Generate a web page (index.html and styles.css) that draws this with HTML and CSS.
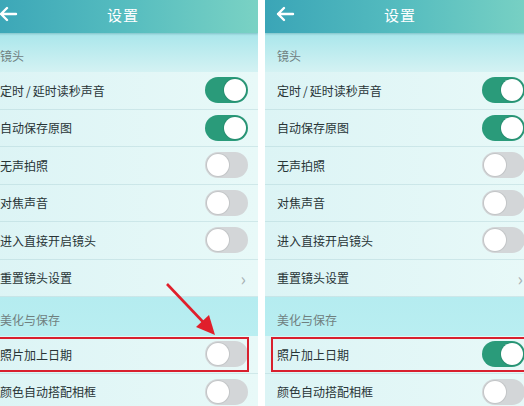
FILE: index.html
```html
<!DOCTYPE html>
<html lang="zh">
<head>
<meta charset="utf-8">
<link rel="stylesheet" href="styles.css">
</head>
<body>
<div class="stage">
  <div class="panel panel-left">
    <div class="header">
      <svg class="back" viewBox="0 0 20 16" width="20" height="16"><path d="M18 8H3M9 2L3 8l6 6" fill="none" stroke="#fff" stroke-width="2.4" stroke-linecap="round" stroke-linejoin="round"/></svg>
      <div class="title">设置</div>
    </div>
    <div class="section sec1">镜头</div>
    <div class="row"><span>定时<b class="sl">/</b>延时读秒声音</span><i class="tg on"></i></div>
    <div class="row"><span>自动保存原图</span><i class="tg on"></i></div>
    <div class="row"><span>无声拍照</span><i class="tg"></i></div>
    <div class="row"><span>对焦声音</span><i class="tg"></i></div>
    <div class="row"><span>进入直接开启镜头</span><i class="tg"></i></div>
    <div class="row"><span>重置镜头设置</span><i class="chev">›</i></div>
    <div class="section sec2">美化与保存</div>
    <div class="row hl"><span>照片加上日期</span><i class="tg"></i></div>
    <div class="row"><span>颜色自动搭配相框</span><i class="tg"></i></div>
    <svg class="arrow" viewBox="0 0 60 60" width="60" height="60"><line x1="2" y1="2" x2="40" y2="42" stroke="#e01f2b" stroke-width="2.6"/><polygon points="50,53 31,45 44,33" fill="#e01f2b"/></svg>
  </div>
  <div class="panel panel-right">
    <div class="header">
      <svg class="back" viewBox="0 0 20 16" width="20" height="16"><path d="M18 8H3M9 2L3 8l6 6" fill="none" stroke="#fff" stroke-width="2.4" stroke-linecap="round" stroke-linejoin="round"/></svg>
      <div class="title">设置</div>
    </div>
    <div class="section sec1">镜头</div>
    <div class="row"><span>定时<b class="sl">/</b>延时读秒声音</span><i class="tg on"></i></div>
    <div class="row"><span>自动保存原图</span><i class="tg on"></i></div>
    <div class="row"><span>无声拍照</span><i class="tg"></i></div>
    <div class="row"><span>对焦声音</span><i class="tg"></i></div>
    <div class="row"><span>进入直接开启镜头</span><i class="tg"></i></div>
    <div class="row"><span>重置镜头设置</span><i class="chev">›</i></div>
    <div class="section sec2">美化与保存</div>
    <div class="row hl"><span>照片加上日期</span><i class="tg on"></i></div>
    <div class="row"><span>颜色自动搭配相框</span><i class="tg"></i></div>
  </div>
</div>
</body>
</html>
```
FILE: styles.css
```css
html, body { margin: 0; padding: 0; background: #fff; }
.stage {
  width: 524px; height: 406px; overflow: hidden;
  display: flex; gap: 7px;
  font-family: "Noto Sans CJK SC", "Noto Sans", sans-serif;
}
.panel {
  position: relative;
  flex: 0 0 270px; width: 270px; height: 406px;
  background: linear-gradient(90deg, #dcf4f5, #e8f9f8);
  overflow: hidden;
}
.panel-left { margin-left: -12px; }
.header {
  height: 33px; position: relative; box-sizing: border-box;
  padding-bottom: 5px;
  background: linear-gradient(90deg, #3aa5b7 0%, #55bcbf 50%, #7ad2c4 100%);
  display: flex; align-items: center; justify-content: center;
  box-shadow: 0 1px 2px rgba(0,80,90,0.25);
  z-index: 1;
}
.back { position: absolute; left: 10px; top: 6px; }
.title { color: #fff; font-size: 15px; letter-spacing: 1px; }
.section {
  display: flex; align-items: flex-end;
  padding: 0 12px 8px; box-sizing: border-box;
  height: 39px; font-size: 12px; color: #70807f;
}
.sec1 { background: linear-gradient(180deg, #a9e6eb, #d4f2f3); }
.sec2 { background: linear-gradient(180deg, #b5ecf0, #b9eef1); }
.row {
  height: 37.5px; box-sizing: border-box;
  display: flex; align-items: center; justify-content: space-between;
  padding: 0 10px 0 12px;
  font-size: 12px; color: #283436;
  border-bottom: 1px solid rgba(160,200,205,0.35);
}
.sl { font-weight: normal; margin: 0 2px; }
.row.hl { position: relative; }
.row.hl::after {
  content: ""; position: absolute;
  left: 6px; right: 9px; top: 1px; bottom: 1px;
  border: 2px solid #d8202e;
}
.panel-left .row.hl::after { left: 10px; right: 9px; }
.tg {
  width: 43px; height: 26px; border-radius: 13px;
  background: #d3d6d8; position: relative; box-sizing: border-box;
}
.tg::after {
  content: ""; position: absolute; top: 2px; left: 2px;
  width: 22px; height: 22px; border-radius: 50%;
  background: #fff; box-shadow: 0 0 0 1px rgba(0,0,0,0.08);
}
.tg.on { background: #2a9b7a; }
.tg.on::after { left: auto; right: 2px; }
.chev {
  font-style: normal; color: #a8b2b4; font-size: 18px;
  margin-right: 2px; line-height: 1;
}
.arrow { position: absolute; left: 177px; top: 282px; }
```
